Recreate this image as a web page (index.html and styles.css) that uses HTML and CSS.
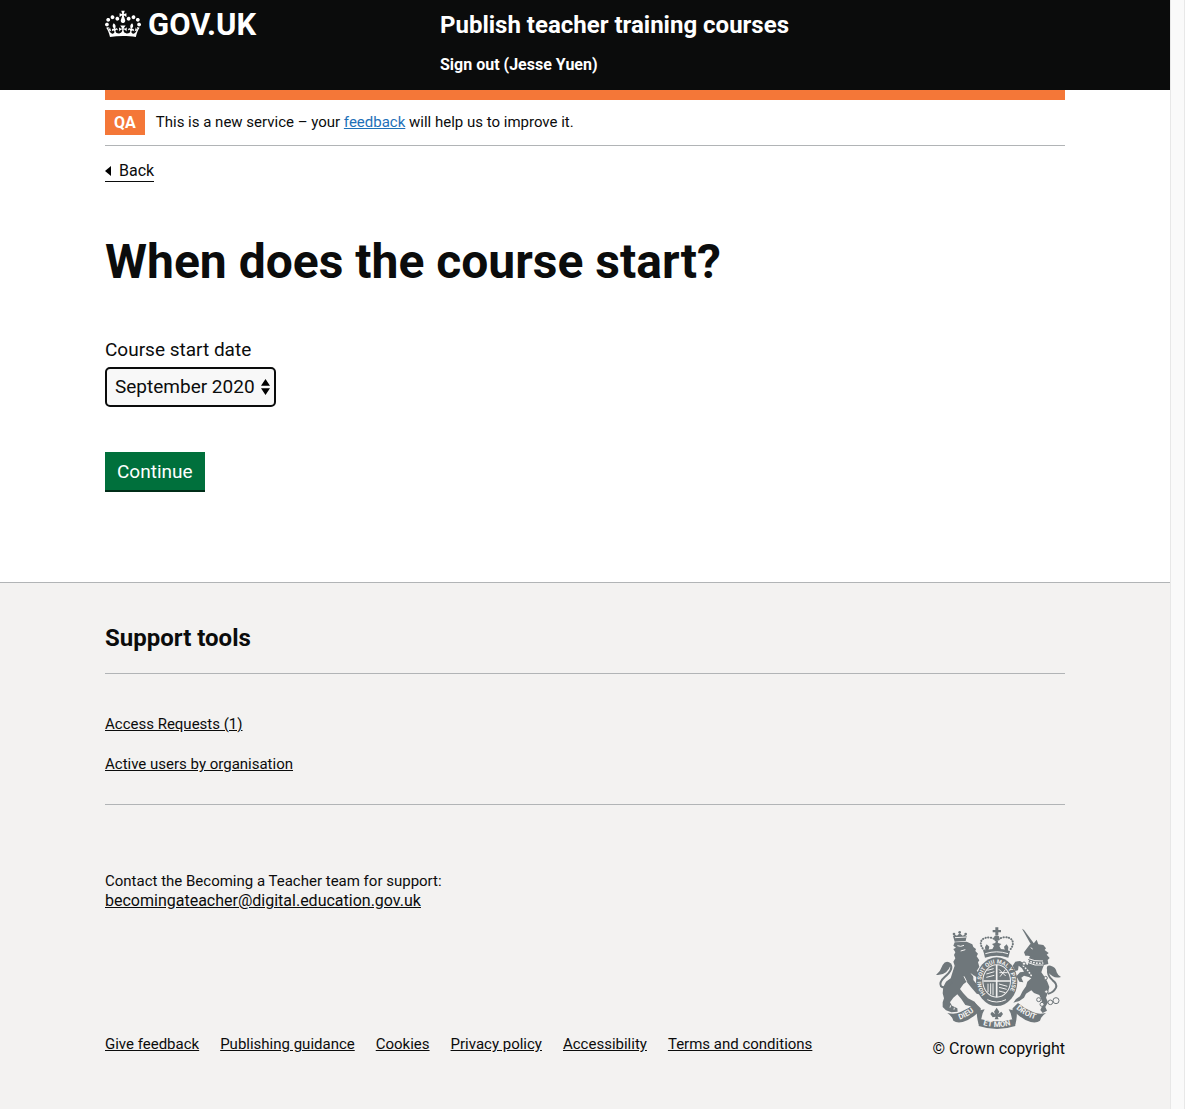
FILE: index.html
```html
<!DOCTYPE html>
<html lang="en">
<head>
<meta charset="utf-8">
<meta name="viewport" content="width=device-width, initial-scale=1">
<title>When does the course start?</title>
<link rel="stylesheet" href="styles.css">
</head>
<body>
<div class="page">
  <header class="header">
    <div class="container header-grid">
      <a class="logo" href="#">
        <svg class="crown" viewBox="0 0 132 97" aria-hidden="true"><path fill="currentColor" fill-rule="evenodd" d="M25 30.2c3.5 1.5 7.7-.2 9.1-3.7 1.5-3.6-.2-7.8-3.9-9.2-3.6-1.4-7.6.3-9.1 3.9-1.4 3.5.3 7.5 3.9 9zM9 39.5c3.6 1.5 7.8-.2 9.2-3.7 1.5-3.6-.2-7.8-3.9-9.1-3.6-1.5-7.6.2-9.1 3.8-1.4 3.5.3 7.5 3.8 9zM4.4 57.2c3.5 1.5 7.7-.2 9.1-3.8 1.5-3.6-.2-7.7-3.9-9.1-3.5-1.5-7.6.3-9.1 3.8-1.4 3.5.3 7.6 3.9 9.1zm38.3-21.4c3.5 1.5 7.7-.2 9.1-3.8 1.5-3.6-.2-7.7-3.9-9.1-3.6-1.5-7.6.3-9.1 3.8-1.3 3.6.4 7.7 3.9 9.1zm64.4-5.6c-3.6 1.5-7.8-.2-9.1-3.7-1.5-3.6.2-7.8 3.8-9.2 3.6-1.4 7.7.3 9.2 3.9 1.3 3.5-.4 7.5-3.9 9zm15.9 9.3c-3.6 1.5-7.7-.2-9.1-3.7-1.5-3.6.2-7.8 3.7-9.1 3.6-1.5 7.7.2 9.2 3.8 1.5 3.5-.3 7.5-3.8 9zm4.7 17.7c-3.6 1.5-7.8-.2-9.2-3.8-1.5-3.6.2-7.7 3.9-9.1 3.6-1.5 7.7.3 9.2 3.8 1.3 3.5-.4 7.6-3.9 9.1zM89.3 35.8c-3.6 1.5-7.8-.2-9.2-3.8-1.4-3.6.2-7.7 3.9-9.1 3.6-1.5 7.7.3 9.2 3.8 1.4 3.6-.3 7.7-3.9 9.1zM69.7 17.7l8.9 4.7V9.3l-8.9 2.8c-.2-.3-.5-.6-.9-.9L72.4 0H59.6l3.5 11.2c-.3.3-.6.5-.9.9l-8.8-2.8v13.1l8.8-4.7c.3.3.6.7.9.9l-5 15.4v.1c-.2.8-.4 1.6-.4 2.4 0 4.1 3.1 7.5 7 8.1h.2c.3 0 .7.1 1 .1.4 0 .7 0 1-.1h.2c4-.6 7.1-4.1 7.1-8.1 0-.8-.1-1.7-.4-2.4V34l-5.1-15.4c.4-.2.7-.6 1-.9zM66 92.8c16.9 0 32.8 1.1 47.1 3.2 4-16.9 8.9-26.7 14-33.5l-9.6-3.4c1 4.9 1.1 7.2 0 10.2-1.5-1.4-3-4.3-4.2-8.7L108.6 76c2.8-2 5-3.2 7.5-3.3-4.4 9.4-10 11.9-13.6 11.2-4.3-.8-6.3-4.6-5.6-7.9 1-4.7 5.7-5.9 8-.5 4.3-8.7-3-11.4-7.6-8.8 7.1-7.2 7.9-13.5 2.1-21.1-8 6.1-8.1 12.3-4.5 20.8-4.7-5.4-12.1-2.5-9.5 6.2 3.4-5.2 7.9-2 7.2 3.1-.6 4.3-6.4 7.8-13.5 7.2-10.3-.9-10.9-8-11.2-13.8 2.5-.5 7.1 1.8 11 7.3L80.2 60c-4.1 4.4-8 5.3-12.3 5.4 1.4-4.4 8-11.6 8-11.6H55.5s6.4 7.2 7.9 11.6c-4.2-.1-8-1-12.3-5.4l1.4 16.4c3.9-5.5 8.5-7.7 10.9-7.3-.3 5.8-.9 12.8-11.1 13.8-7.2.6-12.9-2.9-13.5-7.2-.7-5 3.8-8.3 7.1-3.1 2.7-8.7-4.6-11.6-9.4-6.2 3.7-8.5 3.6-14.7-4.6-20.8-5.8 7.6-5 13.9 2.2 21.1-4.7-2.6-11.9.1-7.7 8.8 2.3-5.5 7.1-4.2 8.1.5.7 3.3-1.3 7.1-5.7 7.9-3.5.7-9-1.8-13.5-11.2 2.5.1 4.7 1.3 7.5 3.3l-4.7-15.4c-1.2 4.4-2.7 7.2-4.3 8.7-1.1-3-.9-5.3 0-10.2l-9.5 3.4c5 6.9 9.9 16.7 14 33.5 14.8-2.1 30.8-3.2 47.7-3.2z"/></svg>
        <span>GOV.UK</span>
      </a>
      <div class="header-content">
        <a class="service-name" href="#">Publish teacher training courses</a>
        <nav><a class="sign-out" href="#">Sign out (Jesse Yuen)</a></nav>
      </div>
    </div>
  </header>

  <div class="container">
    <div class="phase-banner">
      <strong class="tag">QA</strong>
      <span>This is a new service – your <a href="#">feedback</a> will help us to improve it.</span>
    </div>
    <a class="back-link" href="#"><svg class="back-arrow" viewBox="0 0 6 10" aria-hidden="true"><path d="M6 0v10L0 5z"/></svg>Back</a>
    <main class="main">
      <h1>When does the course start?</h1>
      <form>
        <label for="start-date">Course start date</label>
        <div class="select-wrap">
          <select id="start-date" class="select"><option>September 2020</option></select>
          <svg class="select-arrows" viewBox="0 0 10 18" aria-hidden="true"><path d="M5 0l5 7.5H0zM5 18l5-7.5H0z"/></svg>
        </div>
        <button class="button" type="submit">Continue</button>
      </form>
    </main>
  </div>

  <footer class="footer">
    <div class="container">
      <section class="support">
        <h2>Support tools</h2>
        <ul class="support-links">
          <li><a href="#">Access Requests (1)</a></li>
          <li><a href="#">Active users by organisation</a></li>
        </ul>
      </section>
      <p class="contact">Contact the Becoming a Teacher team for support:<br><a class="email" href="#">becomingateacher@digital.education.gov.uk</a></p>
      <div class="footer-meta">
        <ul class="footer-links">
          <li><a href="#">Give feedback</a></li>
          <li><a href="#">Publishing guidance</a></li>
          <li><a href="#">Cookies</a></li>
          <li><a href="#">Privacy policy</a></li>
          <li><a href="#">Accessibility</a></li>
          <li><a href="#">Terms and conditions</a></li>
        </ul>
        <a class="copyright" href="#">
          <svg class="crest" viewBox="36 36 375 306" aria-hidden="true">
            <defs>
              <path id="garter" d="M185 237A46 54 0 1 1 251 237"/>
              <path id="ribbon-left" d="M107 314Q135 304 162 280"/>
              <path id="ribbon-mid" d="M177 330Q218 342 262 330"/>
              <path id="ribbon-right" d="M276 281Q303 305 340 315"/>
            </defs>
            <!-- lion -->
            <g class="ink">
              <path d="M92 80l-5-17 6-4 6 3 8-7 9 7 6-3 6 4-3 15z"/>
              <circle cx="107" cy="52" r="4"/><circle cx="90" cy="57" r="4"/><circle cx="125" cy="57" r="4"/>
              <path d="M92 82L128 80L145 88L148 96L156 102L154 108L162 116L158 124L166 136L162 142L166 155L158 168L170 176L180 190L172 196L160 188L148 180L148 195L160 210L178 232L174 240L158 236L140 215L128 200L118 208L108 222L118 235L132 250L152 260L158 270L140 274L124 270L112 252L100 238L88 248L78 262L84 272L100 280L101 290L82 292L66 286L56 276L56 262L60 250L56 235L58 215L66 200L80 190L86 170L92 152L88 140L94 130L90 120L94 112L88 102L96 98L88 92z"/>
              <path d="M82 146Q66 132 56 150Q50 168 36 180Q54 182 66 172Q76 162 82 146z"/>
            </g>
            <path class="line" d="M84 202Q62 224 51 214Q44 202 62 186Q90 162 79 148"/>
            <path class="gap" d="M93 68l34-2M100 92l10 2 10-3M110 108l14-4M128 200l-8-16M142 176l10 12M78 278l2-7M90 284l1-6"/>
            <!-- unicorn -->
            <g class="ink">
              <path d="M294 41l6 4 31 42-8 5z"/>
              <path d="M330 84L338 74L343 88L358 90L366 100L362 105L374 114L368 119L377 129L371 135L373 147L360 150L356 160L352 172L362 186L370 200L376 216L372 232L366 248L372 262L364 276L369 287L356 294L349 285L356 270L352 254L346 240L330 234L322 226L306 236L300 248L286 258L268 263L276 252L288 244L296 228L306 214L310 200L322 190L314 186L300 182L292 188L298 202L286 200L277 184L288 172L300 170L294 160L284 152L282 166L274 168L266 152L274 140L288 138L298 144L312 150L312 134L318 124L312 122L304 122L300 112L310 98L318 88z"/>
              <path d="M370 168Q364 150 380 152Q396 156 398 172Q402 182 411 186Q396 190 386 184Q376 178 370 168z"/>
            </g>
            <path class="line" d="M372 236Q388 234 396 218Q400 206 386 196Q368 182 373 160"/>
            <path class="gap" d="M311 130q20 10 46 8M310 142q22 12 48 8M320 98l6 4"/>
            <path class="gap-beads" d="M312 137q22 10 44 7M298 153l14 14 12 18"/>
            <g class="chain"><circle cx="396" cy="257" r="9"/><circle cx="379" cy="262" r="7"/><circle cx="344" cy="254" r="6"/><circle cx="354" cy="268" r="6"/><circle cx="365" cy="189" r="5"/><circle cx="367" cy="230" r="5"/><circle cx="300" cy="146" r="5"/></g>
            <!-- crown -->
            <g class="ink">
              <path d="M214 37h9v8h8v7h-8v8h-9v-8h-8v-7h8z"/><circle cx="218" cy="69" r="8"/>
              <path d="M178 108q40-13 80 0l-5 20q-35-12-70 0z"/>
              <path d="M204 104l6-11-6-6 9-3 5-6 5 6 9 3-6 6 6 11zM184 108l-1-12 5-8 8 7-3 13zM252 108l1-12-5-8-8 7 3 13z"/>
            </g>
            <path class="beads" d="M181 107C157 78 178 65 200 68Q213 70 218 81Q224 69 239 67C263 64 278 82 256 107"/>
            <path class="gap" d="M184 116q34-11 68 0"/>
            <!-- garter and shield -->
            <ellipse class="ink" cx="218" cy="200" rx="62" ry="73"/>
            <ellipse class="field" cx="218" cy="198" rx="43" ry="50"/>
            <ellipse class="ink" cx="218" cy="198" rx="40" ry="47"/>
            <path class="shield-cross" d="M218 150v96M178 198h80"/>
            <path class="gap" d="M187 177l24-7M187 187l24-6M190 166l19-5M225 163l20 20M228 185l16-21M226 173h25M192 206v25M200 205v33M207 205v36M225 207l25 7M225 217l23 6M225 228l19 5"/>
            <path class="gap" d="M190 254q28 14 56 0"/>
            <text class="motto"><textPath href="#garter">HONI SOIT QUI MAL Y PENSE</textPath></text>
            <!-- ribbon -->
            <g class="ink">
              <path d="M70 294q22 5 38-2 26-10 46-28l16 16q3 10-12 16-22 20-42 25-18 4-28-4-2-12-18-23z"/>
              <path d="M366 294q-22 5-38-2-26-10-46-28l-16 16q-3 10 12 16 22 20 42 25 18 4 28-4 2-12 18-23z"/>
              <path d="M166 311q52 16 106 0l2 22q-55 18-110 0z"/>
              <path d="M158 288l24-5-6 12-4 16-8 18q-6-22-6-41zM278 288l-24-5 6 12 4 16 10 18q6-22 4-41z"/>
              <path d="M218 278l8 12-4 8 10-8 5 7-7 10-9-2 3 8h-12l3-8-9 2-7-10 5-7 10 8-4-8z"/>
            </g>
            <text class="ribbon"><textPath href="#ribbon-left">DIEU</textPath></text>
            <text class="ribbon"><textPath href="#ribbon-mid">ET MON</textPath></text>
            <text class="ribbon"><textPath href="#ribbon-right">DROIT</textPath></text>
          </svg>
          <span>© Crown copyright</span>
        </a>
      </div>
    </div>
  </footer>
</div>
<div class="scroll-gutter"></div>
</body>
</html>
```
FILE: styles.css
```css
* { box-sizing: border-box; }

body {
  margin: 0;
  min-height: 100vh;
  display: flex;
  background: #fff;
  color: #0b0c0c;
  font: 16px/20px Roboto, "Liberation Sans", sans-serif;
}

a { color: inherit; }
ul { list-style: none; margin: 0; padding: 0; }
h1, h2, p { margin: 0; }

.page { flex: 1; min-width: 0; display: flex; flex-direction: column; }
.scroll-gutter {
  width: 15px;
  background: #fafafa;
  border: solid #e8e8e8;
  border-width: 0 1px;
}
.container { width: 100%; max-width: 1020px; margin: 0 auto; padding: 0 30px; }

.header { background: #0b0c0c; color: #fff; }
.header a { text-decoration: none; }
.header-grid { display: grid; grid-template-columns: 335px 1fr; padding-top: 10px; padding-bottom: 14px; }
.logo { display: flex; gap: 7px; font-size: 31px; line-height: 30px; font-weight: 700; }
.crown { width: 36px; height: 28px; }
.header-content { display: grid; gap: 13px; }
.service-name { font-size: 24px; line-height: 30px; font-weight: 700; }
.sign-out { font-weight: 700; line-height: 23px; }

.phase-banner {
  display: flex;
  gap: 11px;
  align-items: center;
  border-top: 10px solid #f47738;
  border-bottom: 1px solid #b1b4b6;
  padding: 10px 0;
  font-size: 15px;
  line-height: 25px;
}
.phase-banner a { color: #1d70b8; }
.tag { background: #f47738; color: #fff; padding: 0 9px; font-size: 16px; }

.back-link {
  display: inline-flex;
  align-items: center;
  gap: 8px;
  margin-top: 15px;
  border-bottom: 1px solid #0b0c0c;
  text-decoration: none;
}
.back-arrow { width: 6px; height: 10px; }

.main { padding: 55px 0 90px; }
h1 { font-size: 48px; line-height: 50px; font-weight: 700; margin-bottom: 50px; }
label { display: block; font-size: 19px; line-height: 25px; margin-bottom: 5px; }
.select-wrap { display: grid; width: 171px; margin-bottom: 45px; align-items: center; }
.select {
  grid-area: 1 / 1;
  appearance: none;
  height: 40px;
  padding: 0 8px;
  border: 2px solid #0b0c0c;
  border-radius: 5px;
  background: #f8f8f8;
  color: #0b0c0c;
  font: inherit;
  font-size: 19px;
}
.select-arrows { grid-area: 1 / 1; justify-self: end; width: 9px; height: 18px; margin-right: 6px; pointer-events: none; }
.button {
  display: block;
  border: 0;
  border-bottom: 2px solid #002d18;
  background: #00703c;
  color: #fff;
  font: inherit;
  font-size: 19px;
  height: 40px;
  padding: 1px 12px 0;
}

.footer { flex: 1; background: #f3f2f1; border-top: 1px solid #b1b4b6; padding: 40px 0 50px; font-size: 15px; }
h2 { font-size: 24px; line-height: 30px; padding-bottom: 20px; border-bottom: 1px solid #b1b4b6; }
.support-links { display: grid; gap: 20px; padding: 40px 0 30px; border-bottom: 1px solid #b1b4b6; }
.contact { padding-top: 66px; margin-bottom: 16px; }
.email { font-size: 16px; }
.footer-meta { display: flex; justify-content: space-between; align-items: flex-end; }
.footer-links { display: flex; flex-wrap: wrap; gap: 5px 21px; margin-bottom: 5px; }
.copyright { display: grid; justify-items: center; gap: 10px; font-size: 16px; text-decoration: none; }

.crest { width: 125px; height: 102px; }
.ink { fill: #6f777b; }
.field { fill: #f3f2f1; }
.line { fill: none; stroke: #6f777b; stroke-width: 6; }
.gap { fill: none; stroke: #f3f2f1; stroke-width: 3; }
.gap-beads { fill: none; stroke: #f3f2f1; stroke-width: 5; stroke-linecap: round; stroke-dasharray: 1 8; }
.chain { fill: #f3f2f1; stroke: #6f777b; stroke-width: 3; }
.beads { fill: none; stroke: #6f777b; stroke-width: 6; stroke-linecap: round; stroke-dasharray: 1 7; }
.shield-cross { fill: none; stroke: #f3f2f1; stroke-width: 5; }
.motto { fill: #f3f2f1; font-size: 17px; font-weight: 700; }
.ribbon { fill: #f3f2f1; font-size: 23px; font-weight: 700; }
```
